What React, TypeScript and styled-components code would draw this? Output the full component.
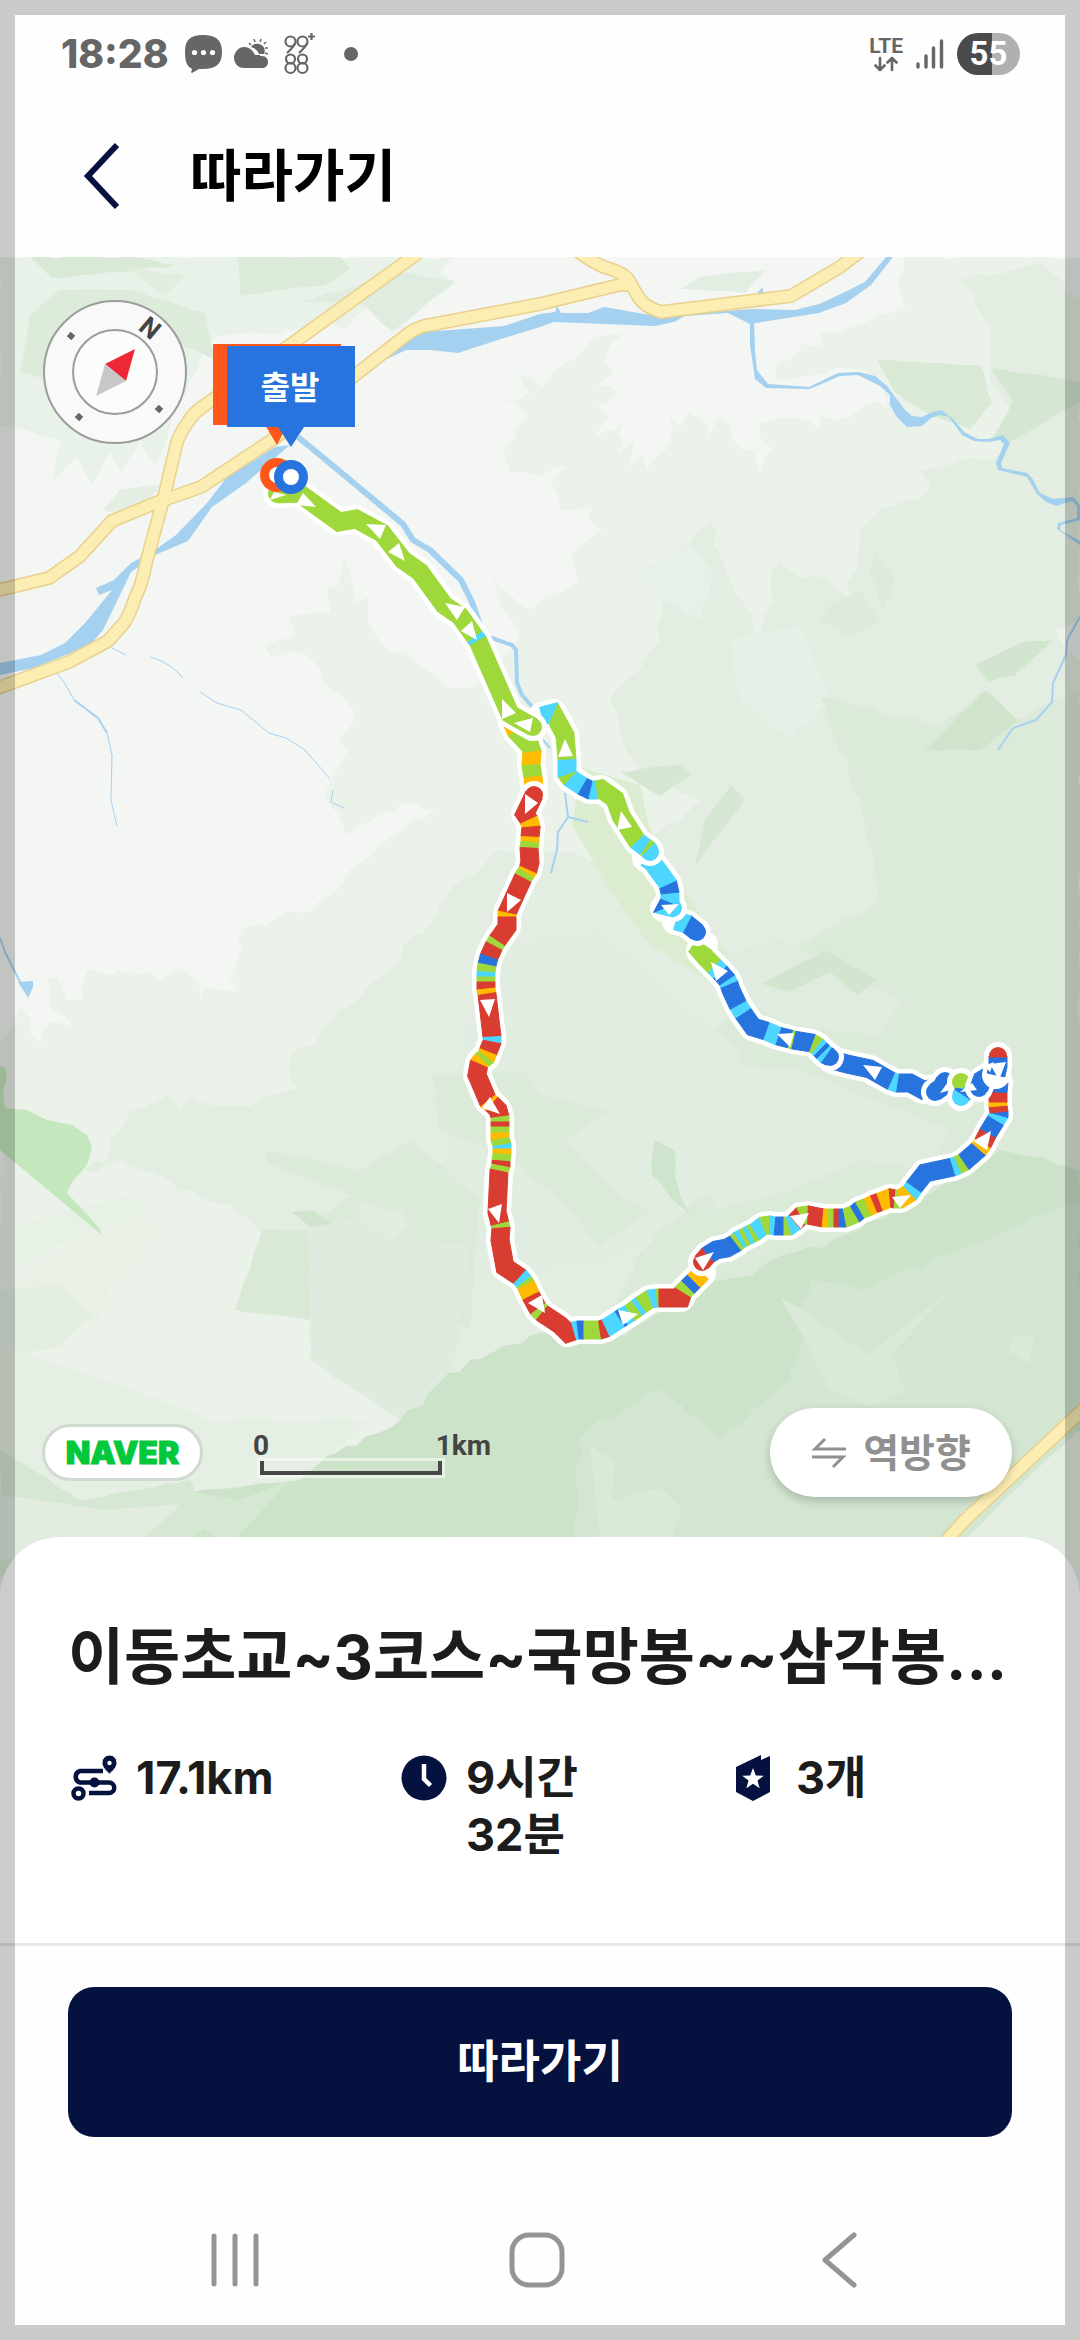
import React from "react";
import styled, { createGlobalStyle } from "styled-components";

const navy = "#051240";
const ink = "#1c1c1c";
const grey = "#666666";
const fontStack = `Inter, "Noto Sans CJK KR", sans-serif`;

const GlobalStyle = createGlobalStyle`
  *, *::before, *::after { box-sizing: border-box; }
  body { margin: 0; background: #fefefe; font-family: ${fontStack}; color: ${ink}; }
  button { font: inherit; border: 0; padding: 0; background: none; cursor: pointer; }
  h1, h2, p, ul { margin: 0; padding: 0; }
  svg { display: block; }
`;

const Screen = styled.div`
  min-height: 100vh;
  display: flex;
  flex-direction: column;
  background: #fefefe;
`;

const Frame = styled.div`
  position: fixed;
  inset: 0;
  border: 15px solid rgba(0, 0, 0, 0.2);
  pointer-events: none;
  z-index: 10;
`;

const StatusBar = styled.div`
  display: flex;
  align-items: center;
  justify-content: space-between;
  height: 78px;
  padding: 30px 60px 0 61px;
  color: ${grey};
`;

const StatusGroup = styled.div<{ $gap: number }>`
  display: flex;
  align-items: center;
  gap: ${(p) => p.$gap}px;
`;

const Clock = styled.span`
  font-size: 39px;
  line-height: 48px;
  font-weight: 800;
`;

const Network = styled.div`
  display: flex;
  flex-direction: column;
  align-items: center;
  font-family: Roboto, sans-serif;
  font-size: 21px;
  line-height: 20px;
  font-weight: 700;
`;

const Battery = styled.div`
  display: flex;
  align-items: center;
  justify-content: center;
  width: 63px;
  height: 42px;
  border-radius: 21px;
  background: linear-gradient(90deg, #4b4b4b 55%, #b0b0b0 55%);
  color: #fff;
  font-family: Roboto, sans-serif;
  font-size: 33px;
  line-height: 42px;
  font-weight: 700;
`;

const Header = styled.header`
  display: flex;
  align-items: center;
  gap: 58px;
  height: 179px;
  padding: 25px 72px 8px;
`;

const BackButton = styled.button`
  width: 60px;
  height: 72px;
  display: flex;
  align-items: center;
  justify-content: center;
`;

const Title = styled.h1`
  font-size: 56px;
  line-height: 72px;
  font-weight: 700;
  color: #000;
`;

const MapArea = styled.section`
  position: relative;
  flex: 1 1 auto;
  min-height: 600px;
  overflow: hidden;
  background: #f3f6f3;
`;

const MapSvg = styled.svg`
  position: absolute;
  inset: 0;
  width: 100%;
  height: 100%;
`;

const MapControls = styled.div`
  position: absolute;
  left: 42px;
  right: 68px;
  bottom: 100px;
  display: flex;
  align-items: center;
`;

const NaverBadge = styled.a`
  display: flex;
  align-items: center;
  justify-content: center;
  width: 161px;
  height: 57px;
  border: 3px solid #d0dad0;
  border-radius: 29px;
  background: #fff;
  color: #03c83c;
  -webkit-text-stroke: 1px #03c83c;
  font-family: Inter, sans-serif;
  font-size: 32px;
  line-height: 40px;
  font-weight: 900;
  text-decoration: none;
`;

const Scale = styled.div`
  margin-left: 50px;
  width: 238px;
  color: #444;
  font-family: Roboto, sans-serif;
  font-size: 28px;
  line-height: 30px;
  font-weight: 700;
`;

const ScaleLabels = styled.div`
  display: flex;
  justify-content: space-between;
`;

const ScaleBar = styled.div`
  width: 182px;
  height: 14px;
  margin-left: 7px;
  border: 4px solid #484848;
  border-top: 0;
  box-shadow: 0 0 0 3px rgba(255, 255, 255, 0.5);
`;

const ReverseButton = styled.button`
  display: flex;
  align-items: center;
  justify-content: center;
  gap: 16px;
  width: 242px;
  height: 89px;
  margin-left: auto;
  border-radius: 45px;
  background: #fff;
  box-shadow: 0 4px 10px rgba(0, 0, 0, 0.2);
`;

const ReverseLabel = styled.span`
  color: #909090;
  font-size: 39px;
  line-height: 54px;
  font-weight: 700;
`;

const Sheet = styled.section`
  position: relative;
  margin-top: -60px;
  padding: 80px 68px 80px;
  border-radius: 60px 60px 0 0;
  background: #fff;
`;

const CourseName = styled.h2`
  font-size: 61px;
  line-height: 80px;
  font-weight: 700;
  white-space: nowrap;
`;

const Stats = styled.ul`
  display: grid;
  grid-template-columns: repeat(3, minmax(0, 1fr));
  gap: 46px;
  margin-top: 52px;
  list-style: none;
`;

const Stat = styled.li`
  display: flex;
  align-items: flex-start;
  gap: 19px;
  padding-left: 3px;
`;

const StatIcon = styled.span`
  display: flex;
  align-items: center;
  flex: none;
  height: 57px;
`;

const StatText = styled.span`
  padding-right: 48px;
  font-size: 45px;
  line-height: 57px;
  font-weight: 700;
  word-break: keep-all;
`;

const Footer = styled.footer`
  padding: 41px 68px 79px;
  border-top: 3px solid #e8e8e8;
`;

const FollowButton = styled.button`
  width: 100%;
  height: 150px;
  border-radius: 26px;
  background: ${navy};
  color: #fff;
  font-size: 45px;
  line-height: 60px;
  font-weight: 700;
`;

const SystemNav = styled.nav`
  display: grid;
  grid-template-columns: repeat(3, 1fr);
  height: 124px;
  padding: 0 90px 36px 84px;
`;

const NavButton = styled.button`
  display: flex;
  align-items: center;
  justify-content: center;
`;

type P = [number, number];
type Stop = [number, number, string];

/* Deterministic noise so that wooded areas get ragged, stable outlines. */
function ragged(points: string, amount: number, seed = 1): string {
  const pts = points.split(" ").map((s) => s.split(",").map(Number) as P);
  let state = seed * 9301 + 49297;
  const rnd = () => {
    state = (state * 1103515245 + 12345) % 2147483648;
    return state / 2147483648 - 0.5;
  };
  const out: string[] = [];
  pts.forEach((a, i) => {
    const b = pts[(i + 1) % pts.length];
    const len = Math.hypot(b[0] - a[0], b[1] - a[1]);
    const n = Math.max(1, Math.round(len / 13));
    for (let k = 0; k < n; k++) {
      const t = k / n;
      const j = k === 0 ? 0 : amount;
      out.push(
        `${(a[0] + (b[0] - a[0]) * t + rnd() * j).toFixed(1)},${(a[1] + (b[1] - a[1]) * t + rnd() * j).toFixed(1)}`
      );
    }
  });
  return out.join(" ");
}

const G = "#9fd83a";
const R = "#d93c30";
const O = "#ffbb00";
const C = "#4dd6ff";
const B = "#2874de";

const loopWest: Stop[] = [
  [512, 722, O], [516, 731, G], [530, 746, G], [532, 752, O], [531, 765, G], [533, 777, O], [534, 786, O],
];
const westBody: Stop[] = [
  [534, 795, R], [525, 814, R], [529, 820, O], [531, 827, R], [530, 837, O], [530, 842, G], [529, 848, R], [530, 862, R], [528, 870, O],
  [526, 873, G], [523, 878, R], [507, 913, O], [507, 917, R], [507, 927, R], [497, 941, G], [494, 946, R],
  [489, 957, B], [487, 965, G], [486, 972, C], [486, 977, G], [486, 982, R], [486, 989, O], [487, 994, R],
  [492, 1037, C], [492, 1042, R], [488, 1052, O], [486, 1057, G], [482, 1060, O], [479, 1064, R], [477, 1075, R],
  [488, 1101, O], [492, 1104, R], [498, 1110, R], [500, 1117, G], [500, 1122, R], [500, 1127, G], [500, 1133, O],
  [500, 1139, G], [502, 1145, C], [502, 1149, O], [502, 1154, G], [501, 1161, R], [501, 1166, G], [499, 1171, R],
  [497, 1212, R], [500, 1224, G], [501, 1228, R], [500, 1240, R], [505, 1267, R], [520, 1277, C], [524, 1282, G],
  [526, 1285, O], [531, 1296, R], [538, 1309, G], [542, 1313, R], [560, 1325, R], [568, 1333, R], [574, 1331, C],
  [578, 1330, B], [584, 1330, G], [600, 1330, R], [606, 1328, C], [620, 1319, B], [623, 1317, C], [630, 1313, G],
  [637, 1308, C], [641, 1305, G], [650, 1299, C], [657, 1298, G], [659, 1298, R], [681, 1298, R], [683, 1292, G],
  [688, 1287, B], [694, 1281, O], [702, 1273, O],
];
const eastBody: Stop[] = [
  [702, 1262, R], [708, 1255, B], [716, 1250, B], [727, 1248, B], [736, 1243, G], [739, 1240, C], [743, 1238, G],
  [747, 1236, C], [751, 1234, G], [755, 1232, C], [763, 1226, G], [770, 1225, C], [775, 1226, B], [784, 1226, G],
  [789, 1226, C], [795, 1222, R], [801, 1216, G], [808, 1215, R], [823, 1218, O], [828, 1218, G], [834, 1218, R],
  [839, 1218, B], [845, 1218, G], [855, 1214, B], [860, 1210, G], [868, 1207, O], [874, 1204, R], [880, 1202, O],
  [890, 1198, R], [895, 1199, G], [900, 1199, O], [910, 1193, C], [914, 1187, B], [925, 1173, B], [953, 1167, C],
  [958, 1165, G], [964, 1162, B], [979, 1149, O], [983, 1143, R], [988, 1133, B], [996, 1120, C], [999, 1115, B],
  [999, 1112, R], [998, 1106, O], [998, 1102, R], [998, 1092, B], [999, 1082, B],
];
const summit: Stop[] = [[996, 1075, B], [998, 1066, B], [998, 1057, R], [998, 1056, R]];
const ridgeA: Stop[] = [[992, 1074, B], [982, 1080, B], [979, 1088, B]];
const ridgeB: Stop[] = [[961, 1082, G], [965, 1087, C], [966, 1090, B], [962, 1095, C], [961, 1097, C]];
const ridgeC: Stop[] = [[945, 1081, B], [942, 1087, B], [935, 1092, B]];
const ridgeD: Stop[] = [
  [938, 1088, B], [923, 1090, B], [910, 1083, B], [897, 1083, C], [891, 1081, B], [870, 1069, B], [847, 1064, B], [832, 1060, B],
];
const ridgeE: Stop[] = [
  [830, 1057, B], [826, 1055, C], [823, 1052, B], [820, 1049, C], [817, 1046, G], [812, 1043, B], [793, 1040, G],
  [790, 1039, B], [778, 1036, C], [766, 1031, B], [753, 1027, B], [743, 1013, C], [738, 1005, B], [731, 990, B],
  [729, 984, C], [727, 980, B], [720, 972, C], [714, 966, G], [706, 958, G], [700, 951, G], [704, 945, G],
];
const ridgeG: Stop[] = [[697, 932, B], [687, 924, C], [676, 921, C]];
const ridgeH: Stop[] = [[673, 908, C], [664, 908, B], [670, 902, C], [670, 893, B], [668, 884, C], [652, 862, C], [646, 858, C]];
const ridgeI: Stop[] = [
  [650, 852, C], [648, 849, G], [645, 847, C], [637, 841, G], [621, 816, G], [615, 799, G], [601, 789, G],
  [596, 790, C], [590, 790, B], [582, 786, C], [570, 778, G], [567, 774, C], [567, 759, G], [565, 735, G],
  [553, 713, C], [542, 716, C],
];
const trunk: Stop[] = [
  [277, 494, G], [299, 493, G], [339, 522, G], [356, 519, G], [382, 533, G], [403, 560, G], [420, 572, G],
  [444, 605, G], [460, 616, G], [475, 637, C], [478, 641, G], [510, 714, G], [533, 727, G],
];

/* A trail drawn as mitred quads, one per colour stop, over a white casing. */
function Trail({ stops, capStart, capEnd }: { stops: Stop[]; capStart?: boolean; capEnd?: boolean }) {
  const h = 9;
  const normals = stops.map((_, i) => {
    const seg = (a: Stop, b: Stop): P => {
      const l = Math.hypot(b[0] - a[0], b[1] - a[1]) || 1;
      return [-(b[1] - a[1]) / l, (b[0] - a[0]) / l];
    };
    const prev = i > 0 ? seg(stops[i - 1], stops[i]) : null;
    const next = i < stops.length - 1 ? seg(stops[i], stops[i + 1]) : null;
    const a = prev ?? next!;
    const b = next ?? prev!;
    let x = a[0] + b[0];
    let y = a[1] + b[1];
    const l = Math.hypot(x, y) || 1;
    x /= l;
    y /= l;
    const k = h / Math.max(0.8, x * a[0] + y * a[1]);
    return [x * k, y * k] as P;
  });
  const last = stops[stops.length - 1];
  return (
    <g>
      <polyline
        points={stops.map((s) => `${s[0]},${s[1]}`).join(" ")}
        fill="none"
        stroke="#fff"
        strokeWidth={28}
        strokeLinejoin="round"
        strokeLinecap="round"
      />
      {capStart && <circle cx={stops[0][0]} cy={stops[0][1]} r={h} fill={stops[0][2]} />}
      {capEnd && <circle cx={last[0]} cy={last[1]} r={h} fill={last[2]} />}
      {stops.slice(0, -1).map((s, i) => {
        const e = stops[i + 1];
        const n = normals[i];
        const m = normals[i + 1];
        const d = [
          [s[0] + n[0], s[1] + n[1]], [e[0] + m[0], e[1] + m[1]], [e[0] - m[0], e[1] - m[1]], [s[0] - n[0], s[1] - n[1]],
        ];
        return (
          <polygon key={i} points={d.map((q) => q.join(",")).join(" ")} fill={s[2]} stroke={s[2]} strokeWidth={1} strokeLinejoin="round" />
        );
      })}
    </g>
  );
}

const arrows = [
  "303,493 296,505 316,507", "366,524 386,525 380,539", "399,543 388,552 405,561", "445,603 465,607 457,620",
  "472,621 461,631 477,640", "270,500 274,492 286,495", "502,699 516,713 502,719", "514,723 533,718 530,732",
  "565,739 573,756 558,757", "525,794 538,803 525,814", "621,811 632,827 617,830", "507,893 521,900 507,912",
  "480,1000 495,999 489,1017", "711,962 728,971 716,981", "777,1034 794,1033 790,1047", "661,905 679,904 669,915",
  "863,1065 882,1067 875,1080", "990,1064 1006,1062 999,1080", "973,1141 991,1131 987,1150", "892,1197 911,1195 900,1208",
  "790,1216 809,1213 801,1229", "948,1082 940,1093 954,1089", "695,1258 714,1252 703,1270", "490,1097 482,1108 500,1114",
  "488,1209 502,1204 499,1223", "528,1303 542,1295 545,1313", "618,1310 638,1314 623,1325", "972,1083 960,1092 977,1090",
  "984,1066 994,1062 990,1072",
];

const land: { c: string; j: number; p: string }[] = [
  { c: "#e9f2e8", j: 5, p: "0,257 452,257 440,272 455,283 392,333 370,306 345,330 318,318 300,330 215,338 200,360 170,425 155,465 140,440 122,472 110,452 92,484 78,458 54,482 62,440 0,425" },
  { c: "#d8e9d5", j: 3, p: "30,257 130,257 175,265 120,272 52,278" },
  { c: "#dcebda", j: 2, p: "60,290 130,290 205,313 215,360 150,330 110,400 20,372 30,315" },
  { c: "#dcebd9", j: 2, p: "238,257 340,257 350,268 325,285 240,296" },
  { c: "#e2ede0", j: 2, p: "128,268 185,275 165,296" },
  { c: "#e0ecdf", j: 3, p: "300,302 400,272 455,281 392,331 360,302" },
  { c: "#e4eee3", j: 4, p: "103,510 120,489 160,486 145,503 110,512" },
  { c: "#eaf2e9", j: 9, p: "905,257 1080,257 1080,1600 0,1600 0,1043 7,1035 20,1006 40,1044 50,1022 73,1027 50,1008 47,977 57,977 67,1000 83,1000 88,969 100,973 147,971 160,980 183,970 198,982 200,1004 203,988 238,991 230,978 242,949 242,929 277,918 313,912 350,870 400,832 437,808 402,803 345,835 325,800 348,750 339,740 355,720 344,697 331,690 303,653 272,658 265,647 296,633 289,617 331,613 327,587 337,587 344,560 355,603 368,597 368,620 390,652 410,657 444,687 475,687 520,633 503,610 492,573 510,595 530,610 578,580 571,557 602,530 588,520 592,507 561,510 550,483 568,465 540,477 510,473 503,450 527,417 506,400 530,393 517,373 543,387 564,363 595,338 623,335 604,360 614,373 595,387 616,392 593,405 609,417 595,437 623,420 617,453 633,440 630,467 643,453 647,470 666,450 669,417 681,427 688,413 702,420 707,440 719,417 733,440 757,450 760,473 772,450 759,437 760,423 795,417 819,430 815,408 836,420 876,402 888,407 884,383 864,370 836,368 795,378 774,378 778,363 798,353 802,342 822,345 821,333 840,332 864,323 905,307 898,280" },
  { c: "#e3eee2", j: 2, p: "680,289 700,277 767,270 745,293 700,290" },
  { c: "#e3ede1", j: 6, p: "960,280 1040,262 1080,300 1080,620 1000,640 1048,600 1045,560 960,520 920,470 1000,455 1020,420 990,380 990,330" },
  { c: "#d9e9d5", j: 2, p: "877,360 980,365 992,403 970,429 930,415 895,392" },
  { c: "#d5e7d2", j: 2, p: "991,368 1080,382 1080,402 1010,442 993,437 1013,401" },
  { c: "#e3ede1", j: 11, p: "880,510 920,500 950,475 985,470 1000,500 1050,560 1060,640 1080,660 1080,1600 480,1600 440,1420 330,1330 250,1220 120,1160 75,1180 110,1150 130,1110 170,1095 180,1110 190,1095 235,1105 300,1090 290,1060 400,960 460,880 500,850 610,860 700,800 640,770 610,700 660,640 670,560 710,520 730,580 760,640 780,560 850,600 860,530" },
  { c: "#e7f1ea", j: 4, p: "640,570 690,545 715,575 700,620 660,600" },
  { c: "#e6f0e7", j: 3, p: "730,640 800,625 830,700 790,740 740,700" },
  { c: "#dfeadd", j: 3, p: "830,605 860,590 880,620 850,638 820,620" },
  { c: "#dfeadd", j: 2, p: "875,550 895,580 883,610 870,572" },
  { c: "#dceada", j: 6, p: "820,697 940,725 990,690 1017,720 1080,690 1080,1600 520,1600 560,1400 700,1150 700,1050 780,960 880,900 860,800" },
  { c: "#d2e6cf", j: 2, p: "975,665 1020,643 1053,640 1015,675 988,682" },
  { c: "#cfe4cb", j: 2, p: "985,690 1018,720 980,750 925,750" },
  { c: "#d5e7d3", j: 1, p: "620,772 680,764 692,774 660,796" },
  { c: "#d5e7d3", j: 1, p: "731,785 745,800 695,865 705,820" },
  { c: "#e1ece0", j: 3, p: "700,960 780,940 900,1000 880,1035 790,1025 720,990" },
  { c: "#d2e6cf", j: 1, p: "762,984 825,950 877,980 857,995 830,972 790,992" },
  { c: "#e1ece0", j: 3, p: "690,1060 800,1070 900,1110 950,1130 930,1170 860,1160 790,1190 715,1210" },
  { c: "#e2ede1", j: 4, p: "480,950 600,930 690,1010 740,1050 740,1170 620,1260 480,1280 440,1200 460,1060" },
  { c: "#dbead9", j: 2, p: "265,1150 360,1170 412,1140 480,1200 470,1330 310,1225 350,1195 270,1165" },
  { c: "#d1e4ce", j: 1, p: "292,1212 312,1210 357,1241 342,1253" },
  { c: "#e2ede1", j: 1, p: "359,1202 402,1212 409,1225 390,1241 360,1231" },
  { c: "#dbead9", j: 4, p: "432,1075 525,1072 540,1095 610,1110 565,1140 620,1195 650,1210 600,1245 560,1200 500,1150 440,1130" },
  { c: "#cfe4cc", j: 4, p: "655,1140 675,1150 675,1175 690,1215 665,1190 652,1175" },
  { c: "#d9e9d5", j: 2, p: "262,1230 308,1230 310,1320 235,1310" },
  { c: "#e0ebdf", j: 2, p: "309,1227 355,1218 390,1238 470,1245 450,1400 400,1420 310,1360" },
  { c: "#cce3c9", j: 8, p: "470,1360 560,1330 600,1345 700,1290 860,1230 1000,1150 1080,1170 1080,1600 90,1600 150,1500 300,1470 400,1420" },
  { c: "#d3e6d1", j: 6, p: "600,1420 660,1390 700,1420 720,1440 790,1380 810,1280 860,1290 960,1250 1080,1200 1080,1600 570,1600 580,1440" },
  { c: "#dbe9d8", j: 2, p: "780,1297 870,1355 960,1280 892,1353 905,1392 870,1406 830,1390 805,1340" },
  { c: "#dbe9d8", j: 1, p: "1012,1337 1034,1336 1030,1364 1008,1352" },
  { c: "#dbe9d8", j: 2, p: "590,1445 615,1460 612,1500 660,1488 682,1508 670,1545 600,1545" },
  { c: "#e8f1e5", j: 2, p: "0,1230 130,1195 155,1210 40,1252 0,1280" },
  { c: "#e8f1e4", j: 2, p: "0,1300 75,1240 145,1220 158,1232 110,1285 95,1330 60,1285 0,1290" },
  { c: "#e3eee1", j: 2, p: "0,1290 60,1285 92,1315 60,1345 0,1360" },
  { c: "#e5efe3", j: 2, p: "0,1345 160,1400 210,1420 370,1420 300,1480 110,1500 0,1500" },
  { c: "#d6e8d3", j: 2, p: "0,1450 80,1500 190,1480 215,1537 160,1600 0,1600" },
  { c: "#e2ede0", j: 2, p: "0,1495 110,1510 180,1505 130,1550 0,1560" },
  { c: "#cbe4c8", j: 1, p: "350,1465 500,1580 140,1580 220,1515" },
  { c: "#d5e8d2", j: 1, p: "180,1490 240,1500 290,1480 230,1545 205,1530" },
  { c: "#e3ede1", j: 1, p: "1080,1430 1030,1475 965,1540 1080,1600" },
];

const parkShapes = [
  "0,1066 5,1068 7,1078 3,1092 5,1108 27,1110 47,1120 72,1125 87,1135 92,1147 87,1165 72,1182 67,1193 100,1229 102,1235 0,1150",
];

const roads = [
  "M418,253 L293,343 L222,393 L205,405 Q194,412 188,422 Q178,436 176,446 L164,497 L146,563 Q142,585 135,598 Q130,614 124,623 L108,641 L69,662 L-5,689",
  "M540,304 L424,326 Q414,329 405,336 L275,438 L201,487 L158,502 L112,521 L79,557 L49,578 L-5,591",
  "M540,304 L619,285 L631,285",
  "M576,250 Q592,262 604,267 Q622,272 628,279 L639,298 Q645,307 661,312 L791,296 L840,267 L862,250",
  "M1090,1403 L1027,1462 L965,1520 L920,1570",
];

const waterShapes = [
  "355,380 370,367 406,350 430,350 458,353 504,338 540,327 554,322 655,326 674,322 685,316 728,313 750,324 819,313 846,303 871,285 893,257 886,257 865,282 843,293 819,304 795,310 753,309 700,313 662,317 604,307 588,313 561,313 557,306 555,312 540,314 504,326 424,332 406,340 370,363 355,374",
  "275,447 227,477 207,503 176,535 152,552 131,563 114,580 96,588 99,595 112,590 86,622 65,643 41,655 0,663 0,675 34,668 90,645 103,630 120,595 131,572 155,555 188,541 212,507 246,483 290,445",
  "750,320 754,320 755,350 757,370 768,384 809,387 838,373 859,372 875,376 887,386 893,394 905,410 912,416 922,417 930,413 941,410 953,419 964,432 978,439 988,439 1003,435 1010,443 1001,463 1002,468 1027,473 1032,478 1040,493 1053,499 1074,497 1080,505 1080,520 1061,525 1060,530 1080,541 1080,545 1057,529 1058,523 1077,518 1077,506 1072,501 1056,506 1046,502 1037,494 1027,477 998,470 996,463 1004,444 1000,440 988,442 974,441 962,435 949,417 940,415 931,418 922,426 907,427 896,416 890,405 890,395 880,386 858,375 840,376 810,389 766,388 755,379 750,345",
  "18,982 33,981 33,987 28,998",
  "757,293 763,287 763,293",
];

const streams: { w: number; d: string }[] = [
  { w: 6, d: "M298,437 L320,455 L403,524 L413,540 L430,550 L461,580 L472,602 L480,625" },
  { w: 4, d: "M489,637 L512,645 L516,650 L517,683 L522,695 L535,710" },
  { w: 2, d: "M543,740 L550,748 M565,793 L568,817 L588,822 M568,817 L558,832 L557,850 L551,873" },
  { w: 1, d: "M57,673 L64,682 L74,700 M107,733 L112,755 L111,800 L117,826" },
  { w: 2, d: "M74,700 L98,718 L107,733" },
  { w: 1, d: "M112,648 L126,655 M150,657 Q170,662 183,678 M200,692 L217,703 L241,710 L269,733 L286,738 L305,750 L330,779 M333,790 L331,802 L344,808" },
  { w: 2, d: "M1080,617 L1067,640 L1066,655 L1053,683 L1052,702 L1036,720 L1013,728 L998,750" },
  { w: 2, d: "M0,938 L5,952 L20,982" },
];

function TrailMap() {
  return (
    <MapSvg viewBox="0 257 1080 1340" preserveAspectRatio="xMidYMin slice" role="img" aria-label="코스 지도">
      {land.map((a, i) => (
        <polygon key={i} points={ragged(a.p, a.j, i + 1)} fill={a.c} />
      ))}
      <polygon points="582,768 640,785 650,830 690,900 730,960 715,985 675,960 650,945 610,890 572,825" fill="#dcecd0" />
      {parkShapes.map((p) => <polygon key={p} points={p} fill="#c5e7bd" />)}
      {waterShapes.map((p) => <polygon key={p} points={p} fill="#a5d1f1" />)}
      {streams.map((s) => (
        <path key={s.d} d={s.d} fill="none" stroke="#a5d1f1" strokeWidth={s.w} strokeLinejoin="round" />
      ))}
      {roads.map((d) => <path key={d} d={d} fill="none" stroke="#e9d08e" strokeWidth={14} strokeLinejoin="round" />)}
      {roads.map((d) => <path key={d} d={d} fill="none" stroke="#fceeb3" strokeWidth={11} strokeLinejoin="round" />)}

      <Trail stops={loopWest} />
      <Trail stops={westBody} capStart />
      <Trail stops={eastBody} capStart />
      <Trail stops={ridgeD} />
      <Trail stops={ridgeC} capStart capEnd />
      <Trail stops={ridgeB} capStart capEnd />
      <Trail stops={ridgeA} capEnd />
      <Trail stops={summit} capEnd />
      <Trail stops={ridgeE} capStart />
      <Trail stops={ridgeG} capStart />
      <Trail stops={ridgeH} capStart />
      <Trail stops={ridgeI} capStart />
      <Trail stops={trunk} capStart capEnd />
      {arrows.map((p) => <polygon key={p} points={p} fill="#fff" />)}

      <path d="M213,344 h128 v81 h-54 l-10,20 l-12,-20 h-52 Z" fill="#ff571b" />
      <circle cx="277" cy="475" r="17" fill="#ff571b" />
      <circle cx="277" cy="475" r="8" fill="#fff" />
      <path d="M227,346 h128 v81 h-51 l-13,20 l-13,-20 h-51 Z" fill="#2874de" />
      <circle cx="291" cy="477" r="17" fill="#2874de" />
      <circle cx="291" cy="477" r="8" fill="#fff" />
      <text x="290" y="399" textAnchor="middle" fontFamily="Noto Sans CJK KR" fontWeight="700" fontSize="32" fill="#fff">출발</text>

      <circle cx="115" cy="372" r="71" fill="#f8f9f8" stroke="#9b9d9b" strokeWidth="2" />
      <circle cx="115" cy="372" r="42" fill="#fbfdfa" stroke="#9b9d9b" strokeWidth="2" />
      <polygon points="135,349 105,364 126,381" fill="#ee2737" />
      <polygon points="105,364 126,381 96,396" fill="#c8c8c8" />
      {([[71, 336], [79, 417], [159, 409]] as P[]).map(([x, y]) => (
        <rect key={x} x={x - 3} y={y - 3} width="6" height="6" fill="#666" transform={`rotate(40 ${x} ${y})`} />
      ))}
      <g transform="translate(150 328) rotate(40)">
        <text x="0" y="9" textAnchor="middle" fontFamily="Roboto" fontWeight="700" fontSize="26" fill="#444">N</text>
      </g>
    </MapSvg>
  );
}

const ChatIcon = () => (
  <svg width="37" height="38" viewBox="0 0 37 38" fill={grey}>
    <path d="M18 0C31 0 37 5 37 17S31 34 18 34h-4L7 38c-1 0-1-1 0-4C2 31 0 27 0 17 0 5 5 0 18 0Z" />
    <g fill="#fff"><circle cx="9.500" cy="17.500" r="2.600" /><circle cx="18.500" cy="17.500" r="2.600" /><circle cx="27.500" cy="17.500" r="2.600" /></g>
  </svg>
);

const WeatherIcon = () => (
  <svg width="34" height="30" viewBox="0 0 34 30" fill={grey}>
    <path d="M10 8c5 0 9 3 11 8h5c0 1 0 1 2 1 4 0 6 3 6 6 0 4-3 6-6 6H10C4 29 0 24 0 19S4 8 10 8Z" />
    <path d="M17 8c2-3 5-4 8-3 5 1 7 6 5 10h-5c-1-3-4-6-8-7Z" />
    <path d="M15 4l2 2M20 0l1 3M27 0l-1 3M32 3l-2 2M34 9h-3M34 15l-3-1" stroke={grey} strokeWidth="1.500" />
  </svg>
);

const HealthIcon = () => (
  <svg width="32" height="42" viewBox="0 0 32 42" fill="none" stroke={grey} strokeWidth="2.200">
    <circle cx="6.500" cy="8.500" r="5" /><path d="M11 10c-1 4-5 7-8 10" />
    <circle cx="18.500" cy="8.500" r="5" /><path d="M23 10c-1 4-5 7-8 10" />
    <circle cx="6.500" cy="26" r="4.500" /><circle cx="6.500" cy="35" r="5" />
    <circle cx="18.500" cy="26" r="4.500" /><circle cx="18.500" cy="35" r="5" />
    <path d="M24 3.500h7M27.500 0v7" />
  </svg>
);

const DotIcon = () => (
  <svg width="14" height="14" viewBox="0 0 14 14"><circle cx="7" cy="7" r="7" fill={grey} /></svg>
);

const DataArrows = () => (
  <svg width="24" height="16" viewBox="0 0 24 16" fill="none" stroke={grey} strokeWidth="2.600" strokeLinecap="round" strokeLinejoin="round">
    <path d="M6 2v12M1.500 9.500 6 14l4.500-4.500M18 14V2M13.500 6.500 18 2l4.500 4.500" />
  </svg>
);

const SignalIcon = () => (
  <svg width="28" height="32" viewBox="0 0 28 32" stroke={grey} strokeWidth="3.400" strokeLinecap="round">
    <path d="M2 26v3M10 18v11M17.500 10v19M25.500 3v26" />
  </svg>
);

const RouteIcon = () => (
  <svg width="46" height="46" viewBox="0 0 46 46">
    <path d="M32 16H9a6 6 0 0 0 0 11.500h29a5 5 0 0 1 0 10.500H18" fill="none" stroke={navy} strokeWidth="4.500" />
    <circle cx="23.500" cy="27.500" r="5" fill={navy} />
    <path d="M38.500 0a7.500 7.500 0 0 1 7.500 8c0 4-4 8-7.500 11-3.500-3-7.500-7-7.500-11a7.500 7.500 0 0 1 7.500-8Z" fill={navy} stroke="#fff" strokeWidth="1" />
    <circle cx="38.500" cy="8" r="2.200" fill="#fff" />
    <circle cx="7.500" cy="38.500" r="5" fill="#fff" stroke={navy} strokeWidth="4.500" />
  </svg>
);

const TimeIcon = () => (
  <svg width="46" height="46" viewBox="0 0 46 46">
    <circle cx="23" cy="23" r="22.500" fill={navy} />
    <path d="M23 9v15l6.500 6.500" fill="none" stroke="#fff" strokeWidth="4.500" />
  </svg>
);

const BadgeIcon = () => (
  <svg width="46" height="46" viewBox="0 0 46 46">
    <path d="M5 12 30 0v5l9-4v36l-17 9L5 37Z" fill={navy} />
    <path d="m22 13 2.800 7.400 7.900.3-6.200 4.900 2.100 7.600-6.600-4.400-6.600 4.400 2.100-7.600-6.200-4.900 7.900-.3Z" fill="#fff" />
  </svg>
);

const ReverseIcon = () => (
  <svg width="36" height="32" viewBox="0 0 36 32" fill="none" stroke="#909090" strokeWidth="3">
    <path d="M35 12H4L14 2M1 20h31L22 30" />
  </svg>
);

export default function App() {
  return (
    <>
      <GlobalStyle />
      <Screen>
        <StatusBar>
          <StatusGroup $gap={16}>
            <Clock>18:28</Clock>
            <StatusGroup $gap={12}><ChatIcon /><WeatherIcon /></StatusGroup>
            <StatusGroup $gap={28}><HealthIcon /><DotIcon /></StatusGroup>
          </StatusGroup>
          <StatusGroup $gap={13}>
            <Network>LTE<DataArrows /></Network>
            <SignalIcon />
            <Battery>55</Battery>
          </StatusGroup>
        </StatusBar>
        <Header>
          <BackButton aria-label="뒤로">
            <svg width="38" height="68" viewBox="0 0 38 68" fill="none" stroke={navy} strokeWidth="6">
              <path d="M34 3 5 34l29 31" />
            </svg>
          </BackButton>
          <Title>따라가기</Title>
        </Header>
        <MapArea>
          <TrailMap />
          <MapControls>
            <NaverBadge href="#naver">NAVER</NaverBadge>
            <Scale>
              <ScaleLabels><span>0</span><span>1km</span></ScaleLabels>
              <ScaleBar />
            </Scale>
            <ReverseButton>
              <ReverseIcon />
              <ReverseLabel>역방향</ReverseLabel>
            </ReverseButton>
          </MapControls>
        </MapArea>
        <Sheet>
          <CourseName>이동초교~3코스~국망봉~~삼각봉...</CourseName>
          <Stats>
            <Stat><StatIcon><RouteIcon /></StatIcon><StatText>17.1km</StatText></Stat>
            <Stat><StatIcon><TimeIcon /></StatIcon><StatText>9시간 32분</StatText></Stat>
            <Stat><StatIcon><BadgeIcon /></StatIcon><StatText>3개</StatText></Stat>
          </Stats>
        </Sheet>
        <Footer>
          <FollowButton>따라가기</FollowButton>
        </Footer>
        <SystemNav>
          <NavButton aria-label="최근 앱">
            <svg width="50" height="54" viewBox="0 0 50 54" stroke="#949494" strokeWidth="5" strokeLinecap="round">
              <path d="M4 3v48M25 3v48M46 3v48" />
            </svg>
          </NavButton>
          <NavButton aria-label="홈">
            <svg width="56" height="56" viewBox="0 0 56 56" fill="none" stroke="#949494" strokeWidth="5">
              <rect x="3" y="3" width="50" height="50" rx="17" />
            </svg>
          </NavButton>
          <NavButton aria-label="이전">
            <svg width="36" height="56" viewBox="0 0 36 56" fill="none" stroke="#949494" strokeWidth="5" strokeLinecap="round" strokeLinejoin="round">
              <path d="M33 3 4 28l29 25" />
            </svg>
          </NavButton>
        </SystemNav>
      </Screen>
      <Frame />
    </>
  );
}
